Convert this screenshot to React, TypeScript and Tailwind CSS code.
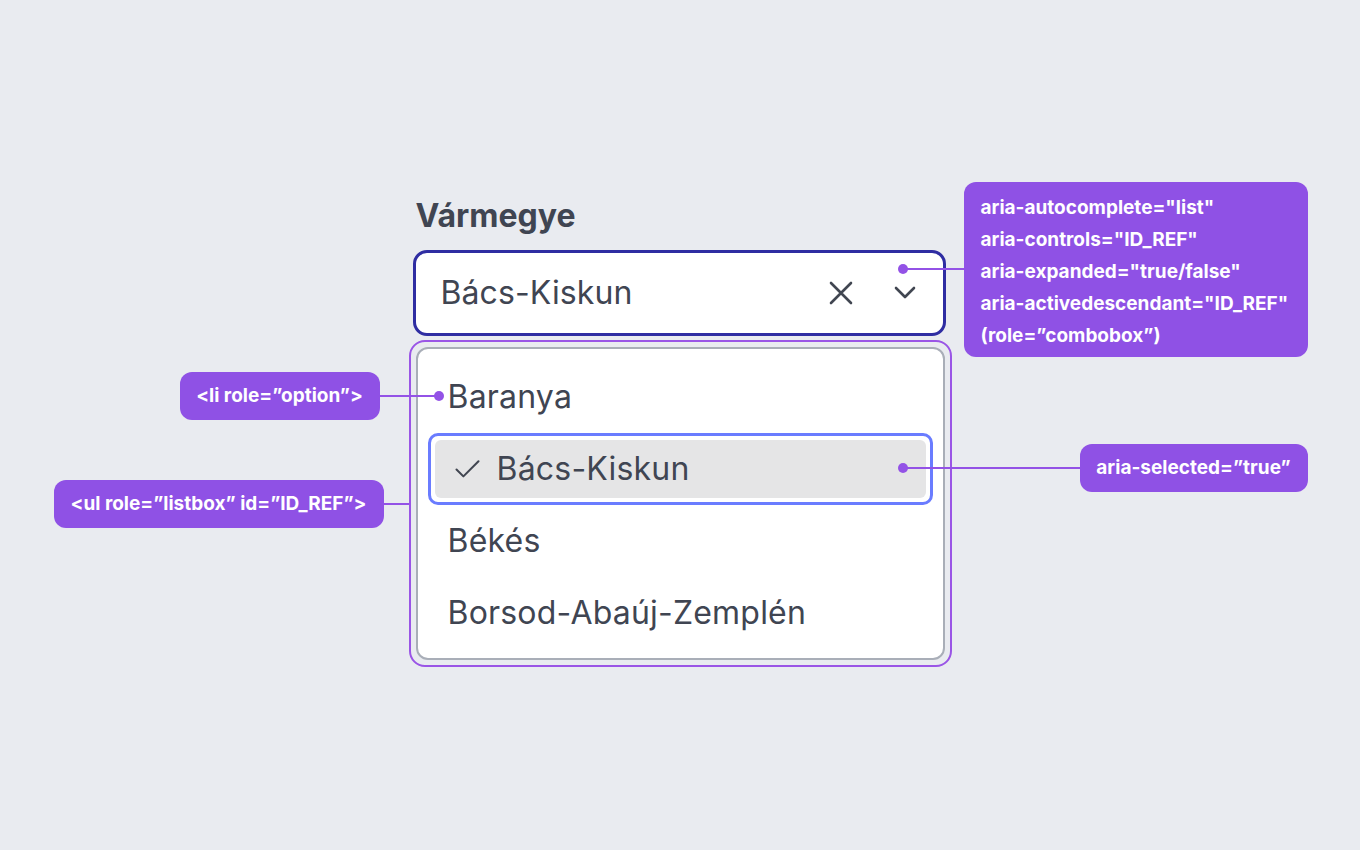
import React from "react";

// Annotated combobox diagram
const options = ["Baranya", "Bács-Kiskun", "Békés", "Borsod-Abaúj-Zemplén"];

function Callout({ className, children }: { className: string; children: React.ReactNode }) {
  return (
    <div className={`absolute rounded-[12px] bg-[#8f51e5] text-white font-bold text-[19px] ${className}`}>
      {children}
    </div>
  );
}

function Line({ className }: { className: string }) {
  return <div className={`absolute h-[2px] bg-[#9352e6] ${className}`} />;
}

function Dot({ className }: { className: string }) {
  return <div className={`absolute w-[10px] h-[10px] rounded-full bg-[#9352e6] ${className}`} />;
}

export default function App() {
  return (
    <main
      className="min-h-screen w-full bg-[#e9ebf0] flex justify-center pt-[196px] text-[#404552]"
      style={{ fontFamily: "Inter, 'Noto Sans', sans-serif" }}
    >
      <div className="relative w-[543px] h-[480px]">
        <label className="block ml-[7px] text-[32px] leading-[40px] font-bold">Vármegye</label>

        {/* combobox */}
        <div className="mt-[14px] ml-[4px] w-[533px] h-[86px] rounded-[14px] border-[3px] border-[#2f2da2] bg-white flex items-center pl-[25px] pr-[26px]">
          <span className="flex-1 text-[32px] leading-none tracking-[0.1px]">Bács-Kiskun</span>
          <svg width="24" height="24" viewBox="0 0 24 24" className="mr-[40px]">
            <path d="M2 2 L22 22 M22 2 L2 22" stroke="#414651" strokeWidth="2.6" strokeLinecap="round" fill="none" />
          </svg>
          <svg width="24" height="16" viewBox="0 0 24 16">
            <path d="M3 3 L12 12 L21 3" stroke="#414651" strokeWidth="2.6" strokeLinecap="round" strokeLinejoin="round" fill="none" />
          </svg>
        </div>

        {/* listbox */}
        <div className="mt-[4px] rounded-[16px] border-2 border-[#9a55e6] p-[5px]">
          <ul className="rounded-[12px] border-2 border-[#a9aeb8] bg-white pt-[12px] pb-[9px] text-[32px] leading-none tracking-[0.2px]">
            {options.map((o) =>
              o === "Bács-Kiskun" ? (
                <li key={o} className="h-[72px] mx-[10px] rounded-[10px] border-[3px] border-[#6a7cff] p-[4px]">
                  <div className="h-full rounded-[6px] bg-[#e5e5e6] flex items-center pl-[16px]">
                    <svg width="33" height="33" viewBox="0 0 24 24" className="mr-[13px]">
                      <path d="M20 6 L9 17 L4 12" stroke="#414651" strokeWidth="1.5" strokeLinecap="round" strokeLinejoin="round" fill="none" />
                    </svg>
                    <span>{o}</span>
                  </div>
                </li>
              ) : (
                <li key={o} className="h-[72px] flex items-center pl-[30px]">
                  {o}
                </li>
              )
            )}
          </ul>
        </div>

        {/* annotations */}
        <Dot className="left-[489px] top-[68px]" />
        <Line className="left-[494px] top-[72px] w-[62px]" />
        <Callout className="left-[555px] top-[-14px] w-[344px] h-[175px] pl-[17px] pt-[10px] leading-[32px]">
          <div>aria-autocomplete="list"</div>
          <div>aria-controls="ID_REF"</div>
          <div>aria-expanded="true/false"</div>
          <div>aria-activedescendant="ID_REF"</div>
          <div>(role=”combobox”)</div>
        </Callout>

        <Callout className="left-[-229px] top-[176px] w-[200px] h-[48px] flex items-center justify-center">
          &lt;li role=”option”&gt;
        </Callout>
        <Line className="left-[-29px] top-[199px] w-[60px]" />
        <Dot className="left-[25px] top-[195px]" />

        <Callout className="left-[-355px] top-[284px] w-[330px] h-[48px] flex items-center justify-center">
          &lt;ul role=”listbox” id=”ID_REF”&gt;
        </Callout>
        <Line className="left-[-25px] top-[307px] w-[25px]" />

        <Dot className="left-[489px] top-[267px]" />
        <Line className="left-[494px] top-[271px] w-[177px]" />
        <Callout className="left-[671px] top-[248px] w-[228px] h-[48px] flex items-center justify-center">
          aria-selected=”true”
        </Callout>
      </div>
    </main>
  );
}
